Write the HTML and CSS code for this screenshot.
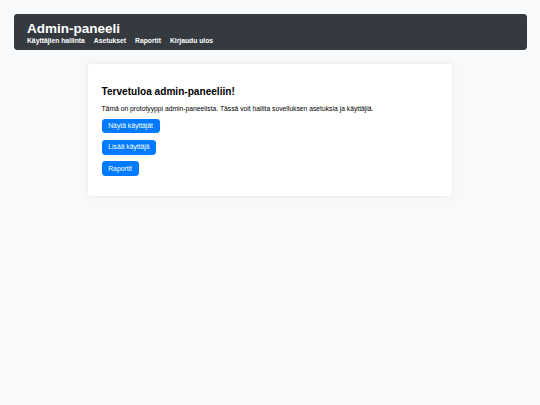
FILE: index.html
```html
<!DOCTYPE html>
<html lang="fi">
<head>
<meta charset="utf-8">
<title>Admin-paneeli</title>
<link rel="stylesheet" href="styles.css">
</head>
<body>
<header class="topbar">
  <h1 class="brand">Admin-paneeli</h1>
  <nav class="nav">
    <a href="#">Käyttäjien hallinta</a>
    <a href="#">Asetukset</a>
    <a href="#">Raportit</a>
    <a href="#">Kirjaudu ulos</a>
  </nav>
</header>
<main class="card">
  <h2 class="card-title">Tervetuloa admin-paneeliin!</h2>
  <p class="card-text">Tämä on prototyyppi admin-paneelista. Tässä voit hallita sovelluksen asetuksia ja käyttäjiä.</p>
  <button class="btn">Näytä käyttäjät</button>
  <button class="btn">Lisää käyttäjä</button>
  <button class="btn">Raportit</button>
</main>
</body>
</html>
```
FILE: styles.css
```css
html, body {
  margin: 0;
  padding: 0;
}
body {
  background: #f8f9fa;
  font-family: "Liberation Sans", Arial, sans-serif;
  font-size: 6.75px;
  color: #000;
  padding: 13.5px;
}
.topbar {
  background: #343a40;
  color: #fff;
  border-radius: 3.4px;
  padding: 7px 13.5px 6.75px;
}
.brand {
  margin: 0;
  font-size: 13.5px;
  font-weight: bold;
  line-height: 16px;
}
.nav {
  display: flex;
  gap: 9px;
}
.nav a {
  color: #fff;
  font-weight: bold;
  text-decoration: none;
}
.card {
  display: block;
  box-sizing: border-box;
  width: 364px;
  margin: 13.5px auto 0;
  background: #fff;
  border-radius: 3.4px;
  padding: 13.5px;
  box-shadow: 0 0 6px rgba(0, 0, 0, 0.08);
}
.card-title {
  font-size: 10.1px;
  margin: 8.4px 0;
}
.card-text {
  margin: 6.75px 0;
}
.btn {
  display: block;
  margin: 6.75px 0;
  background: #007bff;
  color: #fff;
  border: none;
  border-radius: 3.4px;
  padding: 3.4px 6.75px;
  font-family: "Liberation Sans", Arial, sans-serif;
  font-size: 6.75px;
  line-height: 1.15;
  cursor: pointer;
}
```
